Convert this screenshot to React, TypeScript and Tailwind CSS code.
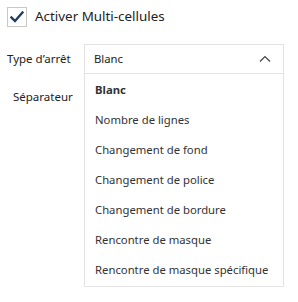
import React from "react";

const items = [
  "Blanc",
  "Nombre de lignes",
  "Changement de fond",
  "Changement de police",
  "Changement de bordure",
  "Rencontre de masque",
  "Rencontre de masque spécifique",
];

export default function App() {
  return (
    <div
      className="w-[298px] h-[302px] bg-white relative text-[#333]"
      style={{ fontFamily: '"Noto Sans", "Open Sans", sans-serif' }}
    >
      <div className="flex items-center pt-[6px] pl-[7px] h-[27px]">
        <div className="w-[20px] h-[20px] border border-[#c8c8c8] bg-white flex items-center justify-center">
          <svg width="14" height="12" viewBox="0 0 14 12">
            <path d="M1.5 6.5 L5 10 L12.5 1.5" fill="none" stroke="#1e3d64" strokeWidth="2.4" strokeLinecap="square" />
          </svg>
        </div>
        <span className="ml-[8px] text-[13.4px] text-[#222] leading-none">Activer Multi-cellules</span>
      </div>
      <div className="flex mt-[17px]">
        <div className="w-[84px] flex flex-col">
          <div className="h-[30px] flex items-center pl-[7px] text-[11.5px] text-[#222]">Type d’arrêt</div>
          <div className="h-[46px] flex items-center pl-[13px] text-[11.5px] text-[#222]">Séparateur</div>
        </div>
        <div className="w-[200px] flex flex-col">
          <div className="h-[30px] border border-[#e3e3e3] flex items-center justify-between pl-[9px] pr-[12px] text-[11.3px] text-[#222]">
            <span>Blanc</span>
            <svg width="12" height="8" viewBox="0 0 12 8">
              <path d="M1 6.5 L6 1.5 L11 6.5" fill="none" stroke="#444" strokeWidth="1.2" />
            </svg>
          </div>
          <div className="border border-t-0 border-[#e3e3e3] flex flex-col pt-[1px] pb-[1px] relative z-10 bg-white">
            {items.map((it, i) => (
              <div
                key={it}
                className={`h-[30px] flex items-center pl-[10px] text-[11.3px] text-[#333] ${i === 0 ? "font-bold" : ""}`}
              >
                {it}
              </div>
            ))}
          </div>
        </div>
      </div>
    </div>
  );
}
